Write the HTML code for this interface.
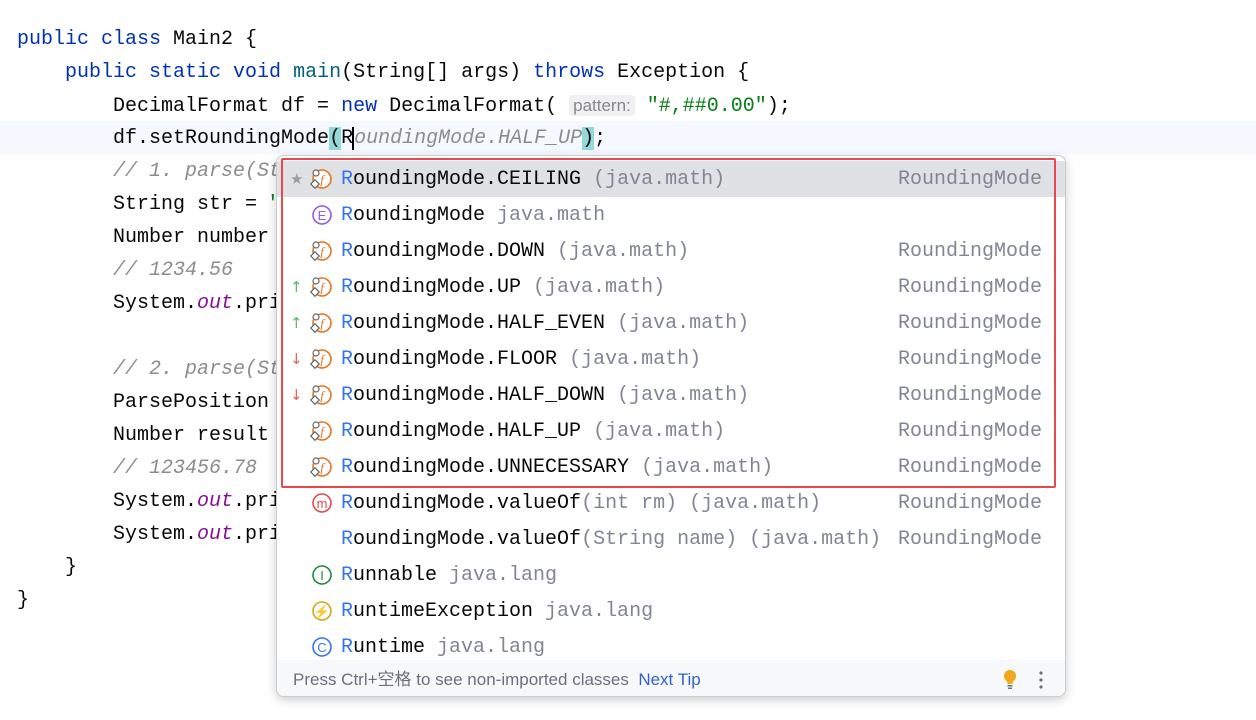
<!DOCTYPE html><html><head><meta charset="utf-8"><style>
*{margin:0;padding:0;box-sizing:border-box}
body{width:1256px;height:720px;background:#fff;position:relative;overflow:hidden;font-family:"Liberation Mono",monospace;font-size:20px;color:#080808}
.l{position:absolute;left:17px;top:0;height:33px;line-height:35px;white-space:pre}
.k{color:#0033b3}.m{color:#00627a}.s{color:#067d17}.c{color:#8c8c8c;font-style:italic}.o{color:#871094;font-style:italic}
.hl{position:absolute;left:0;top:121px;width:1256px;height:33px;background:#f5f8fe}
.hint{font-family:"Liberation Sans",sans-serif;font-size:17px;color:#888;background:#f0f0f2;border-radius:4px;padding:1px 4px}
.pm{background:#93d9d9}
.pop{position:absolute;left:276px;top:155px;width:790px;height:542px;background:#fff;border:1px solid #c9ccd1;border-radius:8px;box-shadow:0 3px 10px rgba(0,0,0,.2);overflow:hidden}
.r{position:absolute;left:0;width:790px;height:36px;line-height:37px;font-size:20px;white-space:pre}
.r .t{position:absolute;left:64px}
.r .rt{position:absolute;left:621px;color:#818594}
.g{color:#818594}.b{color:#3574f0}
.r svg{position:absolute;left:32px;top:7px}
.ar{position:absolute;left:13px;font-size:15px;font-family:"DejaVu Sans",sans-serif}
.foot{position:absolute;left:0;top:504px;width:790px;height:38px;background:#f7f8fa;font-family:"Liberation Sans","Noto Sans CJK SC",sans-serif;font-size:17px;color:#6c707e;line-height:40px;padding-left:16px}
.red{position:absolute;left:4px;top:2px;width:775px;height:330px;border:2px solid #e5484d;border-radius:2px}
</style></head><body>
<div class="hl"></div>
<div class="l" style="top:22px"><span class="k">public class</span> Main2 {</div>
<div class="l" style="top:55px">    <span class="k">public static void</span> <span class="m">main</span>(String[] args) <span class="k">throws</span> Exception {</div>
<div class="l" style="top:88px">        DecimalFormat df = <span class="k">new</span> DecimalFormat( <span class="hint">pattern:</span> <span class="s">"#,##0.00"</span>);</div>
<div class="l" style="top:121px">        df.setRoundingMode<span class="pm">(</span>R<span style="border-left:2px solid #000;margin-left:-1px"></span><span class="c">oundingMode.HALF_UP</span><span class="pm">)</span>;</div>
<div class="l c" style="top:154px">        // 1. parse(String)</div>
<div class="l" style="top:187px">        String str = <span class="s">"</span></div>
<div class="l" style="top:220px">        Number number</div>
<div class="l c" style="top:253px">        // 1234.56</div>
<div class="l" style="top:286px">        System.<span class="o">out</span>.print</div>
<div class="l c" style="top:352px">        // 2. parse(String)</div>
<div class="l" style="top:385px">        ParsePosition</div>
<div class="l" style="top:418px">        Number result</div>
<div class="l c" style="top:451px">        // 123456.78</div>
<div class="l" style="top:484px">        System.<span class="o">out</span>.print</div>
<div class="l" style="top:517px">        System.<span class="o">out</span>.print</div>
<div class="l" style="top:550px">    }</div>
<div class="l" style="top:583px">}</div>

<div class="pop">
<div class="r" style="top:5px;background:#dfe1e5"></div>
<div id="rows"></div>
<div class="red"></div>
<div class="foot">Press Ctrl+空格 to see non-imported classes&nbsp;&nbsp;<span style="color:#2f5fcf">Next Tip</span>
<svg style="position:absolute;left:726px;top:9px" width="14" height="22" viewBox="0 0 14 22"><path d="M7 1a6 6 0 0 0-4 10.5c1 1 1.5 2 1.5 3.5h5c0-1.5.5-2.5 1.5-3.5A6 6 0 0 0 7 1z" fill="#f2a81d"/><rect x="4.5" y="16" width="5" height="1.5" fill="#6c707e"/><rect x="5" y="18.5" width="4" height="1.5" fill="#6c707e"/></svg>
<svg style="position:absolute;left:762px;top:11px" width="4" height="18"><circle cx="2" cy="2" r="1.6" fill="#6c707e"/><circle cx="2" cy="9" r="1.6" fill="#6c707e"/><circle cx="2" cy="16" r="1.6" fill="#6c707e"/></svg></div>
</div>
<script>
var F='<svg width="24" height="24" viewBox="0 0 24 24"><circle cx="13" cy="11" r="9" fill="#fff" stroke="#e8731e" stroke-width="1.6"/><text x="13" y="16" font-size="13" font-family="Liberation Serif" font-style="italic" fill="#e8731e" text-anchor="middle">f</text><rect x="3" y="13" width="6" height="6" transform="rotate(45 6 16)" fill="#fff" stroke="#666" stroke-width="1.2"/><circle cx="7" cy="5" r="3" fill="#fff" stroke="#666" stroke-width="1.2"/></svg>';
function C(col,l){return '<svg width="24" height="24" viewBox="0 0 24 24"><circle cx="13" cy="11" r="9" fill="#fff" stroke="'+col+'" stroke-width="1.6"/><text x="13" y="16" font-size="13" font-family="Liberation Sans" fill="'+col+'" text-anchor="middle">'+l+'</text></svg>';}
var rows=[
['★',F,'RoundingMode.CEILING',' (java.math)',1],
['',C('#8e5ee0','E'),'RoundingMode',' java.math',0],
['',F,'RoundingMode.DOWN',' (java.math)',1],
['↑',F,'RoundingMode.UP',' (java.math)',1],
['↑',F,'RoundingMode.HALF_EVEN',' (java.math)',1],
['↓',F,'RoundingMode.FLOOR',' (java.math)',1],
['↓',F,'RoundingMode.HALF_DOWN',' (java.math)',1],
['',F,'RoundingMode.HALF_UP',' (java.math)',1],
['',F,'RoundingMode.UNNECESSARY',' (java.math)',1],
['',C('#e5484d','m'),'RoundingMode.valueOf','(int rm) (java.math)',1],
['','','RoundingMode.valueOf','(String name) (java.math)',1],
['',C('#208a3c','I'),'Runnable',' java.lang',0],
['',C('#d9a322','⚡'),'RuntimeException',' java.lang',0],
['',C('#3574f0','C'),'Runtime',' java.lang',0]];
var h='';rows.forEach(function(r,i){var ac=r[0]=='★'?'#9a9ca3':r[0]=='↑'?'#5fb865':'#e0625e';
h+='<div class="r" style="top:'+(5+i*36)+'px">'+(r[0]?'<span class="ar" style="color:'+ac+'">'+r[0]+'</span>':'')+r[1]+'<span class="t"><span class="b">R</span>'+r[2].slice(1)+'<span class="g">'+r[3]+'</span></span>'+(r[4]?'<span class="rt">RoundingMode</span>':'')+'</div>';});
document.getElementById('rows').innerHTML=h;
</script>
</body></html>
